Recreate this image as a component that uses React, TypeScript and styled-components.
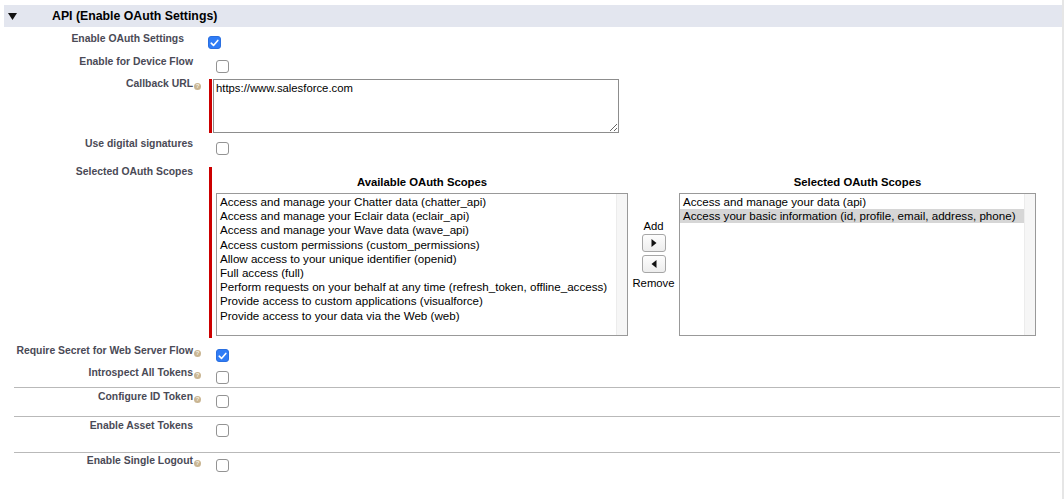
import React from "react";
import styled, { createGlobalStyle, css } from "styled-components";

const GlobalStyle = createGlobalStyle`
  html, body { margin: 0; padding: 0; background: #fff; }
  body { font-family: "Liberation Sans", Arial, Helvetica, sans-serif; }
`;

const Page = styled.div`
  width: 1062px;
  height: 499px;
  border-right: 2px solid #e6e6e6;
  overflow: hidden;
  background: #fff;
`;

const SectionHeader = styled.div`
  margin: 5px 0 0 4px;
  height: 22px;
  background: #e3e6ef;
  display: flex;
  align-items: center;
`;

const Twisty = styled.svg`
  margin-left: 4px;
  width: 9px;
  height: 7px;
  flex: none;
`;

const SectionTitle = styled.h3`
  margin: 0 0 0 35px;
  font-size: 12.3px;
  font-weight: bold;
  color: #000;
  line-height: 14px;
`;

const Row = styled.div<{ $h: number; $pt: number; $divided?: boolean }>`
  display: grid;
  grid-template-columns: ${(p) => (p.$divided ? 187 : 201)}px 1fr;
  column-gap: 7px;
  box-sizing: border-box;
  height: ${(p) => p.$h}px;
  padding-top: ${(p) => p.$pt}px;
  align-items: start;
  ${(p) =>
    p.$divided &&
    css`
      border-top: 1px solid #b9b9b9;
      margin: 0 2px 0 14px;
    `}
`;

const Label = styled.div<{ $pr: number }>`
  text-align: right;
  font-weight: bold;
  font-size: 10.4px;
  line-height: 14px;
  color: #4a4a56;
  padding-right: ${(p) => p.$pr}px;
  white-space: nowrap;
`;

const Help = styled.span`
  display: inline-block;
  width: 7px;
  height: 7px;
  margin-left: 1px;
  border-radius: 50%;
  background: #c9b592;
  color: #f4efe4;
  font-size: 6px;
  line-height: 7px;
  text-align: center;
  vertical-align: -1px;
  font-weight: bold;
`;

const Box = styled.span<{ $checked?: boolean; $flush?: boolean }>`
  display: inline-flex;
  align-items: center;
  justify-content: center;
  box-sizing: border-box;
  width: 13px;
  height: 13px;
  margin-top: ${(p) => (p.$flush ? 4 : 5)}px;
  margin-left: ${(p) => (p.$flush ? 0 : 8)}px;
  border-radius: 3px;
  ${(p) =>
    p.$checked
      ? css`
          background: #2f7cf6;
          border: 1px solid #2a6fe0;
        `
      : css`
          background: #fff;
          border: 1px solid #939393;
        `}
`;

const Cell = styled.div`
  display: flex;
  align-items: flex-start;
`;

const RequiredBlock = styled.div<{ $pl: number; $mt: number; $pb?: number }>`
  display: flex;
  flex-direction: column;
  margin-left: 1px;
  margin-top: ${(p) => p.$mt}px;
  border-left: 3px solid #c00;
  padding-left: ${(p) => p.$pl}px;
  padding-bottom: ${(p) => p.$pb ?? 0}px;
`;

const UrlArea = styled.textarea`
  box-sizing: border-box;
  width: 406px;
  height: 54px;
  margin: 0;
  border: 1px solid #8d8d8d;
  padding: 1px 2px;
  font-family: "Liberation Sans", Arial, sans-serif;
  font-size: 11.3px;
  line-height: 14px;
  color: #000;
  outline: none;
`;

const ScopesGrid = styled.div`
  display: grid;
  grid-template-columns: 412px 51px 357px;
  grid-template-rows: auto 143px;
  padding-top: 8px;
  row-gap: 4px;
`;

const ColHead = styled.div`
  text-align: center;
  font-weight: bold;
  font-size: 11.3px;
  line-height: 14px;
  color: #000;
`;

const ListBox = styled.div`
  box-sizing: border-box;
  border: 1px solid #999;
  display: flex;
  height: 143px;
  background: #fff;
`;

const Items = styled.div`
  flex: 1;
  padding-top: 1px;
`;

const Item = styled.div<{ $selected?: boolean }>`
  padding-left: 3px;
  font-size: 11.6px;
  line-height: 14.2px;
  height: 14.2px;
  color: #000;
  white-space: nowrap;
  background: ${(p) => (p.$selected ? "#d6d6d6" : "transparent")};
`;

const Track = styled.div`
  width: 10px;
  background: #f6f6f6;
  border-left: 1px solid #ececec;
`;

const Mover = styled.div`
  display: flex;
  flex-direction: column;
  align-items: center;
  padding-top: 26px;
  font-size: 11.3px;
  line-height: 14px;
  color: #000;
`;

const MoveButton = styled.button<{ $gap: number }>`
  box-sizing: border-box;
  width: 24px;
  height: 18px;
  margin: ${(p) => p.$gap}px 0 0 1px;
  padding: 0;
  border: 1px solid #a6a6a6;
  border-radius: 3px;
  background: linear-gradient(#fdfdfd, #ededed);
  display: flex;
  align-items: center;
  justify-content: center;
`;

const MoverCaption = styled.span<{ $mt: number }>`
  margin-top: ${(p) => p.$mt}px;
`;

const Check = () => (
  <svg width="9" height="8" viewBox="0 0 9 8">
    <path d="M1.2 4.2 L3.5 6.4 L7.8 1.4" stroke="#fff" strokeWidth="1.6" fill="none" strokeLinecap="round" strokeLinejoin="round" />
  </svg>
);

const CheckBox = ({ checked, flush }: { checked?: boolean; flush?: boolean }) => (
  <Box $checked={checked} $flush={flush}>
    {checked && <Check />}
  </Box>
);

const available = [
  "Access and manage your Chatter data (chatter_api)",
  "Access and manage your Eclair data (eclair_api)",
  "Access and manage your Wave data (wave_api)",
  "Access custom permissions (custom_permissions)",
  "Allow access to your unique identifier (openid)",
  "Full access (full)",
  "Perform requests on your behalf at any time (refresh_token, offline_access)",
  "Provide access to custom applications (visualforce)",
  "Provide access to your data via the Web (web)",
];

const selected = [
  "Access and manage your data (api)",
  "Access your basic information (id, profile, email, address, phone)",
];

type CheckRow = {
  label: string;
  help?: boolean;
  checked?: boolean;
  h: number;
  pt: number;
  divided?: boolean;
};

const lowerRows: CheckRow[] = [
  { label: "Require Secret for Web Server Flow", help: true, checked: true, h: 23, pt: 4 },
  { label: "Introspect All Tokens", help: true, h: 24, pt: 3 },
  { label: "Configure ID Token", help: true, h: 29, pt: 2, divided: true },
  { label: "Enable Asset Tokens", h: 36, pt: 2, divided: true },
  { label: "Enable Single Logout", help: true, h: 47, pt: 1, divided: true },
];

const FieldLabel = ({ text, help, pr }: { text: string; help?: boolean; pr?: number }) => (
  <Label $pr={pr ?? (help ? 0 : 8)}>
    {text}
    {help && <Help>?</Help>}
  </Label>
);

export default function App() {
  return (
    <Page>
      <GlobalStyle />
      <SectionHeader>
        <Twisty viewBox="0 0 9 7">
          <path d="M0 0 H9 L4.5 7 Z" fill="#111" />
        </Twisty>
        <SectionTitle>API (Enable OAuth Settings)</SectionTitle>
      </SectionHeader>

      <Row $h={24} $pt={5}>
        <FieldLabel text="Enable OAuth Settings" pr={17} />
        <Cell>
          <CheckBox checked flush />
        </Cell>
      </Row>

      <Row $h={22} $pt={4}>
        <FieldLabel text="Enable for Device Flow" />
        <Cell>
          <CheckBox />
        </Cell>
      </Row>

      <Row $h={60} $pt={4}>
        <FieldLabel text="Callback URL" help />
        <Cell>
          <RequiredBlock $pl={1} $mt={2}>
            <UrlArea readOnly defaultValue="https://www.salesforce.com" />
          </RequiredBlock>
        </Cell>
      </Row>

      <Row $h={28} $pt={4}>
        <FieldLabel text="Use digital signatures" />
        <Cell>
          <CheckBox />
        </Cell>
      </Row>

      <Row $h={179} $pt={4}>
        <FieldLabel text="Selected OAuth Scopes" />
        <Cell>
          <RequiredBlock $pl={4} $mt={2} $pb={2}>
            <ScopesGrid>
              <ColHead>Available OAuth Scopes</ColHead>
              <div />
              <ColHead>Selected OAuth Scopes</ColHead>
              <ListBox>
                <Items>
                  {available.map((s) => (
                    <Item key={s}>{s}</Item>
                  ))}
                </Items>
                <Track />
              </ListBox>
              <Mover>
                <span>Add</span>
                <MoveButton $gap={1} aria-label="Add">
                  <svg width="6" height="8" viewBox="0 0 6 8">
                    <path d="M0.5 0 L5.5 4 L0.5 8 Z" fill="#111" />
                  </svg>
                </MoveButton>
                <MoveButton $gap={3} aria-label="Remove">
                  <svg width="6" height="8" viewBox="0 0 6 8">
                    <path d="M5.5 0 L0.5 4 L5.5 8 Z" fill="#111" />
                  </svg>
                </MoveButton>
                <MoverCaption $mt={3}>Remove</MoverCaption>
              </Mover>
              <ListBox>
                <Items>
                  {selected.map((s, i) => (
                    <Item key={s} $selected={i === 1}>
                      {s}
                    </Item>
                  ))}
                </Items>
                <Track />
              </ListBox>
            </ScopesGrid>
          </RequiredBlock>
        </Cell>
      </Row>

      {lowerRows.map((r) => (
        <Row key={r.label} $h={r.h} $pt={r.pt} $divided={r.divided}>
          <FieldLabel text={r.label} help={r.help} />
          <Cell>
            <CheckBox checked={r.checked} />
          </Cell>
        </Row>
      ))}
    </Page>
  );
}
